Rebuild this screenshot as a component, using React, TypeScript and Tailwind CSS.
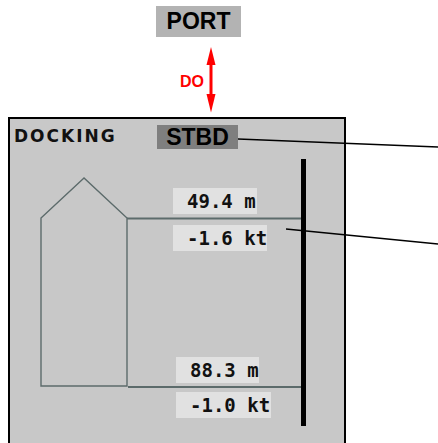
import React from "react";

const Label = ({ text, cls }: { text: string; cls: string }) => (
  <div
    className={`absolute h-[26px] bg-[#e1e1e1] pl-[14px] flex items-center whitespace-nowrap text-[19px] font-bold leading-none text-[#111] ${cls}`}
    style={{ fontFamily: '"DejaVu Sans Mono", monospace' }}
  >
    {text}
  </div>
);

export default function App() {
  return (
    <div className="relative w-[438px] h-[443px] overflow-hidden bg-white">
      <div
        className="ml-[156px] mt-[6px] w-[85px] h-[31px] bg-[#b3b3b3] flex items-center justify-center text-[23px] font-bold text-black leading-none"
        style={{ fontFamily: '"Liberation Sans", Arial, sans-serif' }}
      >
        PORT
      </div>
      <div className="flex h-[80px] ml-[180px]">
        <div
          className="w-[24px] mt-[37px] text-[16px] leading-[16px] font-bold text-[#ff0000]"
          style={{ fontFamily: '"Liberation Sans", Arial, sans-serif' }}
        >
          DO
        </div>
        <svg width="14" height="80" viewBox="0 0 14 80">
          <line x1="7" y1="25" x2="7" y2="58" stroke="#ff0000" strokeWidth="3" />
          <polygon points="7,10 2.5,28 11.5,28" fill="#ff0000" />
          <polygon points="7,75.5 2.5,57 11.5,57" fill="#ff0000" />
        </svg>
      </div>
      <div className="relative ml-[8px] w-[338px] h-[340px] border-2 border-b-0 border-black bg-[#c8c8c8]">
        <svg className="absolute inset-0" width="334" height="340" viewBox="0 0 334 340">
          <polygon
            points="74,59 31,99 31,267 117,267 117,99"
            fill="none"
            stroke="#5c6b6b"
            strokeWidth="1.4"
          />
          <line x1="117" y1="99.5" x2="291" y2="99.5" stroke="#5c6b6b" strokeWidth="2" />
          <line x1="118" y1="268" x2="291" y2="268" stroke="#5c6b6b" strokeWidth="2" />
          <rect x="291" y="40" width="5" height="267" fill="#000" />
        </svg>
        <div className="relative flex items-start pt-[6px]">
          <div
            className="w-[147px] pl-[4px] mt-[1px] text-[17px] leading-[20px] font-bold tracking-[2px] text-[#111]"
            style={{ fontFamily: '"DejaVu Sans", sans-serif' }}
          >
            DOCKING
          </div>
          <div
            className="w-[81px] h-[24px] bg-[#7f7f7f] flex items-center justify-center text-[23px] font-bold text-black leading-none"
            style={{ fontFamily: '"Liberation Sans", Arial, sans-serif' }}
          >
            STBD
          </div>
        </div>
        <Label text="49.4 m" cls="left-[163px] top-[69px] w-[84px]" />
        <Label text="-1.6 kt" cls="left-[163px] top-[106px] w-[94px]" />
        <Label text="88.3 m" cls="left-[166px] top-[238px] w-[83px] h-[25px]" />
        <Label text="-1.0 kt" cls="left-[166px] top-[273px] w-[95px] h-[25px]" />
      </div>
      <svg className="absolute inset-0 pointer-events-none" width="438" height="443" viewBox="0 0 438 443">
        <line x1="238" y1="139" x2="438" y2="147" stroke="#000" strokeWidth="1.3" />
        <line x1="286" y1="229" x2="438" y2="244" stroke="#000" strokeWidth="1.3" />
      </svg>
    </div>
  );
}
